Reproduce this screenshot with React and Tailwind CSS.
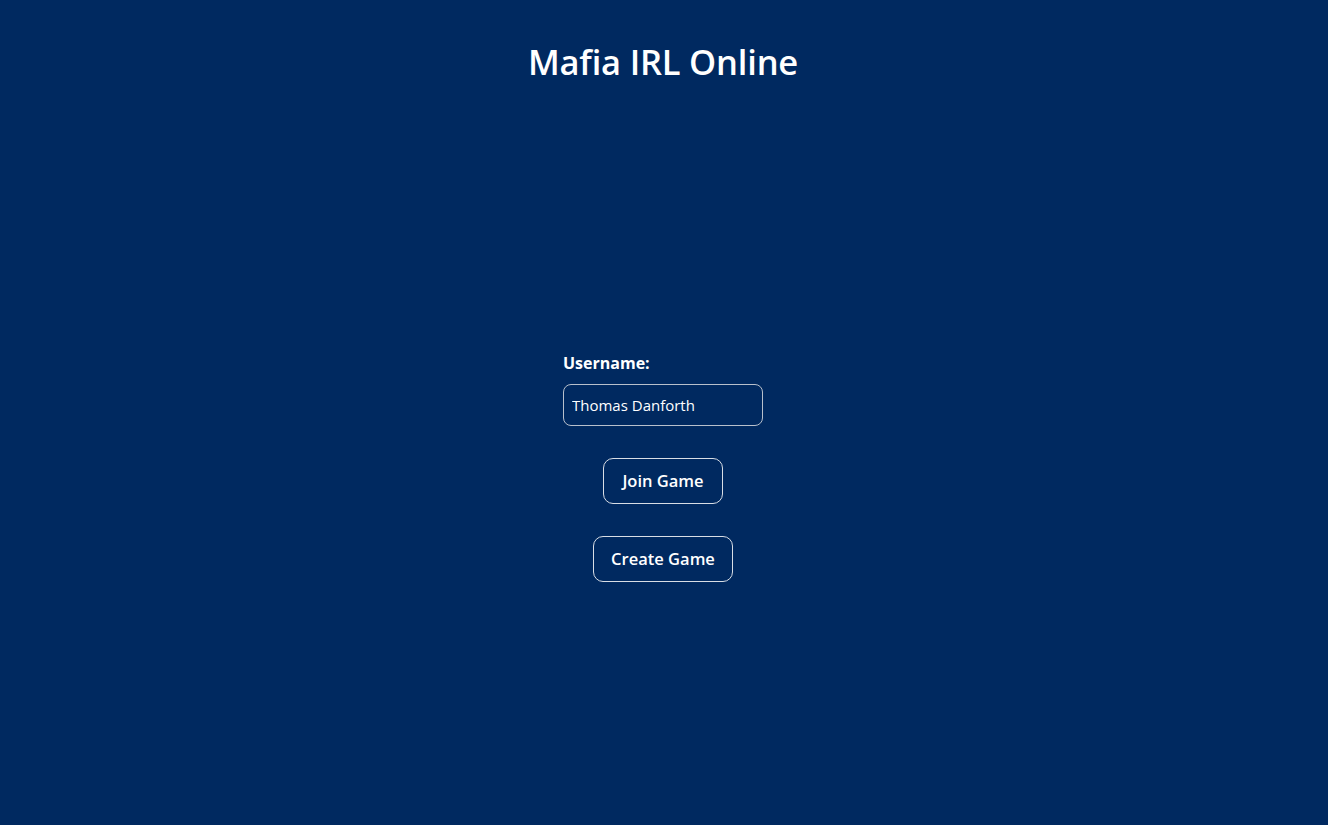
import React from "react";

export default function App() {
  return (
    <div
      className="w-full min-h-[825px] bg-[#002960] text-white flex flex-col items-center"
      style={{ fontFamily: '"Open Sans", "Noto Sans", sans-serif' }}
    >
      <h1 className="mt-[38px] text-[34.5px] leading-[48px] font-semibold tracking-[-0.2px] mr-[2px]">Mafia IRL Online</h1>
      <div className="mt-[266px] flex flex-col items-center mr-[2px]">
        <div className="flex flex-col items-start w-[200px]">
          <label className="text-[16px] leading-[22px] font-bold">Username:</label>
          <input
            defaultValue="Thomas Danforth"
            className="mt-[10px] w-[200px] h-[42px] rounded-[8px] border border-[#b8c0cc] bg-transparent px-[8px] text-[15px] text-white outline-none"
            style={{ fontFamily: '"Open Sans", "Noto Sans", sans-serif' }}
          />
        </div>
        <button className="mt-[32px] w-[120px] h-[46px] rounded-[10px] border border-[#d8dde5] text-[16.5px] font-semibold">
          Join Game
        </button>
        <button className="mt-[32px] w-[140px] h-[46px] rounded-[10px] border border-[#d8dde5] text-[16.5px] font-semibold">
          Create Game
        </button>
      </div>
    </div>
  );
}
